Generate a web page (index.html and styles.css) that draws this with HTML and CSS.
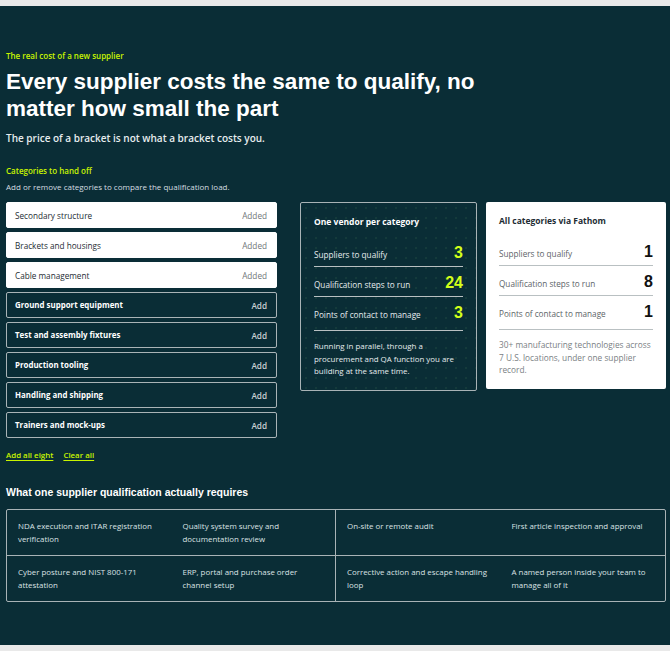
FILE: index.html
```html
<!DOCTYPE html>
<html lang="en">

<head>
	<meta charset="UTF-8">
	<meta name="viewport" content="width=device-width, initial-scale=1.0">
	<title>The real cost of a new supplier</title>
	<link rel="stylesheet" href="styles.css">
</head>

<body>
	<section class="cost">
		<p class="eyebrow">The real cost of a new supplier</p>
		<h1>Every supplier costs the same to qualify, no matter how small the part</h1>
		<p class="lead">The price of a bracket is not what a bracket costs you.</p>

		<p class="label">Categories to hand off</p>
		<p class="hint">Add or remove categories to compare the qualification load.</p>

		<div class="compare">
			<div class="picker">
				<ul class="categories">
					<li class="cat added"><span>Secondary structure</span><span class="state">Added</span></li>
					<li class="cat added"><span>Brackets and housings</span><span class="state">Added</span></li>
					<li class="cat added"><span>Cable management</span><span class="state">Added</span></li>
					<li class="cat"><span>Ground support equipment</span><span class="state">Add</span></li>
					<li class="cat"><span>Test and assembly fixtures</span><span class="state">Add</span></li>
					<li class="cat"><span>Production tooling</span><span class="state">Add</span></li>
					<li class="cat"><span>Handling and shipping</span><span class="state">Add</span></li>
					<li class="cat"><span>Trainers and mock-ups</span><span class="state">Add</span></li>
				</ul>
				<div class="actions">
					<a href="#">Add all eight</a>
					<a href="#">Clear all</a>
				</div>
			</div>

			<div class="card card-dark">
				<h3>One vendor per category</h3>
				<div class="stat"><span>Suppliers to qualify</span><b>3</b></div>
				<div class="stat"><span>Qualification steps to run</span><b>24</b></div>
				<div class="stat"><span>Points of contact to manage</span><b>3</b></div>
				<p class="note">Running in parallel, through a procurement and QA function you are building at the same time.</p>
			</div>

			<div class="card card-light">
				<h3>All categories via Fathom</h3>
				<div class="stat"><span>Suppliers to qualify</span><b>1</b></div>
				<div class="stat"><span>Qualification steps to run</span><b>8</b></div>
				<div class="stat"><span>Points of contact to manage</span><b>1</b></div>
				<p class="note">30+ manufacturing technologies across 7 U.S. locations, under one supplier record.</p>
			</div>
		</div>

		<h2>What one supplier qualification actually requires</h2>
		<div class="steps">
			<div class="step">NDA execution and ITAR registration verification</div>
			<div class="step">Quality system survey and documentation review</div>
			<div class="step">On-site or remote audit</div>
			<div class="step">First article inspection and approval</div>
			<div class="step">Cyber posture and NIST 800-171 attestation</div>
			<div class="step">ERP, portal and purchase order channel setup</div>
			<div class="step">Corrective action and escape handling loop</div>
			<div class="step">A named person inside your team to manage all of it</div>
		</div>
	</section>
</body>

</html>
```

FILE: styles.css
```css
* {
	box-sizing: border-box;
}

body {
	margin: 0;
	padding: 6px 0;
	background: #e9e9e9;
	font-family: "Open Sans", sans-serif;
}

p,
h1,
h2,
h3,
ul {
	margin: 0;
}

.cost {
	background: #0a2d36;
	color: #e6ecee;
	padding: 44px 4px 43px 6px;
}

.eyebrow,
.label {
	color: #c8f400;
	font-size: 8px;
	line-height: 11px;
	font-weight: 600;
}

h1 {
	margin-top: 7px;
	max-width: 490px;
	font-family: "Liberation Sans", Arial, sans-serif;
	font-size: 22.5px;
	line-height: 27px;
	font-weight: 700;
	color: #fff;
}

.lead {
	margin-top: 9px;
	font-size: 10px;
	line-height: 14px;
	font-weight: 600;
	color: #e6ecee;
}

.label {
	margin-top: 20px;
}

.hint {
	margin-top: 5px;
	font-size: 8px;
	line-height: 11px;
	color: #d5dde0;
}

.compare {
	display: flex;
	align-items: flex-start;
	margin-top: 10px;
}

.picker {
	width: 271px;
	margin-right: 23px;
}

.categories {
	list-style: none;
	padding: 0;
	display: flex;
	flex-direction: column;
	gap: 4px;
}

.cat {
	display: flex;
	justify-content: space-between;
	align-items: center;
	height: 26px;
	padding: 0 9px 0 8px;
	border: 1px solid #aab4b7;
	border-radius: 2px;
	font-size: 7.9px;
	font-weight: 700;
	color: #fff;
}

.cat .state {
	font-size: 8.2px;
	font-weight: 600;
	color: #c9d1d4;
}

.cat.added {
	background: #fff;
	border-color: #fff;
	color: #1d2c33;
	font-size: 8.2px;
	font-weight: 500;
}

.cat.added .state {
	color: #6f7579;
	font-weight: 500;
}

.actions {
	display: flex;
	gap: 10px;
	margin-top: 12px;
	font-size: 7.9px;
	line-height: 11px;
	font-weight: 600;
}

.actions a {
	color: #c8f400;
	text-decoration: underline;
	text-underline-offset: 2px;
}

.card {
	padding: 13px 13px 12px;
	border-radius: 2px;
}

.card-dark {
	width: 177px;
	margin-right: 9px;
	border: 1px solid #a9b3b6;
	background-color: #0a2d36;
	background-image: radial-gradient(rgba(120, 190, 110, 0.2) 0.6px, transparent 0.8px);
	background-size: 10px 10px;
	color: #e6ecee;
}

.card-light {
	width: 180px;
	padding-right: 10px;
	background: #fff;
	color: #1d2c33;
}

.card h3 {
	font-size: 8.5px;
	line-height: 12px;
	font-weight: 700;
}

.card-dark h3 {
	color: #fff;
}

.stat {
	display: flex;
	justify-content: space-between;
	align-items: baseline;
	height: 30px;
	padding-top: 7px;
	border-bottom: 1px solid #b9c0c2;
	font-size: 8.2px;
}

.card-light .stat {
	margin-right: 3px;
}

.stat:first-of-type {
	margin-top: 9px;
}

.stat:last-of-type {
	height: 34px;
}

.stat b {
	font-family: "Liberation Sans", Arial, sans-serif;
	font-size: 16px;
	font-weight: 700;
}

.card-dark .stat b {
	color: #d2ff1a;
}

.card-light .stat span {
	color: #5c6468;
}

.card-light .stat b {
	color: #111;
}

.note {
	margin-top: 9px;
	font-size: 7.9px;
	line-height: 12.5px;
}

.card-light .note {
	font-size: 8.3px;
	color: #7a8084;
}

h2 {
	margin-top: 25px;
	font-family: "Liberation Sans", Arial, sans-serif;
	font-size: 10.5px;
	line-height: 13px;
	font-weight: 700;
	color: #fff;
}

.steps {
	display: grid;
	grid-template-columns: repeat(4, 1fr);
	margin-top: 10px;
	border: 1px solid #a9b3b6;
	border-radius: 2px;
}

.step {
	height: 45px;
	padding: 10px 8px 0 11px;
	font-size: 7.9px;
	line-height: 12.5px;
	color: #dbe2e4;
}

.step:nth-child(-n+4) {
	height: 46px;
	border-bottom: 1px solid #a9b3b6;
}

.step:nth-child(4n+2) {
	border-right: 1px solid #a9b3b6;
}
```
